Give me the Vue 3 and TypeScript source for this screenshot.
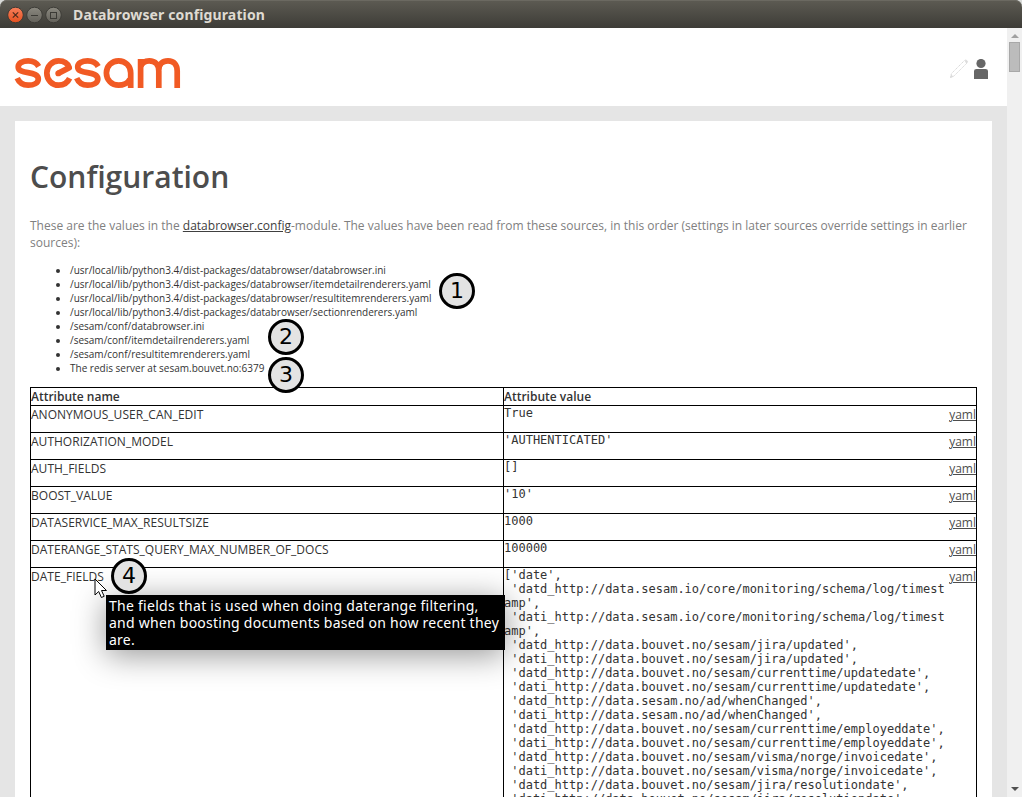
<script setup lang="ts">
interface Attribute {
  name: string
  lines: string[]
}

const sources: string[] = [
  '/usr/local/lib/python3.4/dist-packages/databrowser/databrowser.ini',
  '/usr/local/lib/python3.4/dist-packages/databrowser/itemdetailrenderers.yaml',
  '/usr/local/lib/python3.4/dist-packages/databrowser/resultitemrenderers.yaml',
  '/usr/local/lib/python3.4/dist-packages/databrowser/sectionrenderers.yaml',
  '/sesam/conf/databrowser.ini',
  '/sesam/conf/itemdetailrenderers.yaml',
  '/sesam/conf/resultitemrenderers.yaml',
  'The redis server at sesam.bouvet.no:6379',
]

const attributes: Attribute[] = [
  { name: 'ANONYMOUS_USER_CAN_EDIT', lines: ['True'] },
  { name: 'AUTHORIZATION_MODEL', lines: ["'AUTHENTICATED'"] },
  { name: 'AUTH_FIELDS', lines: ['[]'] },
  { name: 'BOOST_VALUE', lines: ["'10'"] },
  { name: 'DATASERVICE_MAX_RESULTSIZE', lines: ['1000'] },
  { name: 'DATERANGE_STATS_QUERY_MAX_NUMBER_OF_DOCS', lines: ['100000'] },
  {
    name: 'DATE_FIELDS',
    lines: [
      "['date',",
      " 'datd_http://data.sesam.io/core/monitoring/schema/log/timest",
      "amp',",
      " 'dati_http://data.sesam.io/core/monitoring/schema/log/timest",
      "amp',",
      " 'datd_http://data.bouvet.no/sesam/jira/updated',",
      " 'dati_http://data.bouvet.no/sesam/jira/updated',",
      " 'datd_http://data.bouvet.no/sesam/currenttime/updatedate',",
      " 'dati_http://data.bouvet.no/sesam/currenttime/updatedate',",
      " 'datd_http://data.sesam.no/ad/whenChanged',",
      " 'dati_http://data.sesam.no/ad/whenChanged',",
      " 'datd_http://data.bouvet.no/sesam/currenttime/employeddate',",
      " 'dati_http://data.bouvet.no/sesam/currenttime/employeddate',",
      " 'datd_http://data.bouvet.no/sesam/visma/norge/invoicedate',",
      " 'dati_http://data.bouvet.no/sesam/visma/norge/invoicedate',",
      " 'datd_http://data.bouvet.no/sesam/jira/resolutiondate',",
      " 'dati_http://data.bouvet.no/sesam/jira/resolutiondate',",
    ],
  },
]
</script>

<template>
  <div class="window">
    <header class="titlebar">
      <svg class="controls" width="50" height="18" viewBox="0 0 50 18">
        <defs>
          <linearGradient id="closeFill" x1="0" y1="0" x2="0" y2="1">
            <stop offset="0" stop-color="#f7805c" />
            <stop offset="1" stop-color="#e5501f" />
          </linearGradient>
          <linearGradient id="greyFill" x1="0" y1="0" x2="0" y2="1">
            <stop offset="0" stop-color="#8b8980" />
            <stop offset="1" stop-color="#63615a" />
          </linearGradient>
        </defs>
        <circle cx="9.5" cy="9" r="7.800" fill="url(#closeFill)" stroke="#3d3a34" />
        <path d="M6.800 6.300l5.400 5.400M12.200 6.300l-5.400 5.400" stroke="#4b2a1c" stroke-width="1.200" />
        <circle cx="28.500" cy="9" r="7.800" fill="url(#greyFill)" stroke="#3d3c37" />
        <path d="M25 9.500h7" stroke="#3b3a35" />
        <circle cx="47.500" cy="9" r="7.800" fill="url(#greyFill)" stroke="#3d3c37" />
        <rect x="44.500" y="6.500" width="6" height="6" fill="none" stroke="#3b3a35" />
      </svg>
      <span class="window-title">Databrowser configuration</span>
    </header>

    <div class="viewport">
      <main class="page">
        <div class="brandbar">
          <svg class="logo" width="168" height="34" viewBox="14 56 168 34" fill="none" stroke="#f15a24" stroke-width="5.700">
            <path d="M38.700 66.500C36.500 62.600 32.800 60.900 28.200 60.900C22.500 60.900 18.200 63.200 18.200 67C18.200 71 22.800 71.800 28 72.600C33.500 73.500 38.300 74.600 38.300 79C38.300 83 33.800 85.200 28.200 85.200C23 85.200 19.200 82.900 17.200 78.200" />
            <path d="M69.600 78.300C67.600 82.700 63.400 85.200 58.600 85.200C52 85.200 46.800 79.800 46.800 73S52 60.900 58.600 60.900C63.500 60.900 67.700 63.200 69.300 67.600L58.200 73.400" stroke-linejoin="round" />
            <circle cx="58.200" cy="73.400" r="2.850" fill="#f15a24" stroke="none" />
            <path transform="translate(59.500 0)" d="M38.700 66.500C36.500 62.600 32.800 60.900 28.200 60.900C22.500 60.900 18.200 63.200 18.200 67C18.200 71 22.800 71.800 28 72.600C33.500 73.500 38.300 74.600 38.300 79C38.300 83 33.800 85.200 28.200 85.200C23 85.200 19.200 82.900 17.200 78.200" />
            <path d="M130.700 88V73C130.700 66 125.300 60.900 118.600 60.900S106.400 66 106.400 73S111.800 85.200 118.600 85.200C123 85.200 128 83 130 79M140.600 88V59M140.600 67C142 62.700 145 60.900 149.200 60.900C155.500 60.900 158.800 64.800 158.800 71V88M158.800 70C158.800 64.500 162.300 60.900 168 60.900C174 60.900 177.200 64.800 177.200 71V88" />
          </svg>
          <div class="tools">
            <svg width="20" height="20" viewBox="0 0 20 20" fill="none">
              <path d="M1.500 18.500l1-4L15.500 1.500q1.500-1 2.500.2q1 1 0 2.300L5 17z" stroke="#dcdcdc" stroke-dasharray="1.500 .6" />
              <path d="M1 19l1.200-3.500 2.300 2.300zM15.500 1.200h2.500l.5 2.500-1.500.5z" fill="#dcdcdc" />
            </svg>
            <svg width="14" height="20" viewBox="0 0 14 20" fill="#666">
              <circle cx="7" cy="4.500" r="4.600" />
              <path d="M0 20v-8q0-2 2.500-2h9q2.500 0 2.500 2v8z" />
            </svg>
          </div>
        </div>

        <section class="sheet">
          <h1>Configuration</h1>
          <p class="intro">
            These are the values in the <a>databrowser.config</a>-module. The values have been read from these sources, in this order (settings in later sources override settings in earlier<br />sources):
          </p>
          <ul>
            <li v-for="source in sources" :key="source">{{ source }}</li>
          </ul>
          <div class="table">
            <div class="row head">
              <div class="cell">Attribute name</div>
              <div class="cell">Attribute value</div>
            </div>
            <div v-for="attribute in attributes" :key="attribute.name" class="row">
              <div class="cell name">{{ attribute.name }}</div>
              <div class="cell value">
                <pre>{{ attribute.lines.join('\n') }}</pre>
                <a>yaml</a>
              </div>
            </div>
          </div>
        </section>
      </main>

      <aside class="scrollbar">
        <svg width="8" height="4" viewBox="0 0 8 4"><path d="M0 4l4-4 4 4z" fill="#a0a0a0" /></svg>
        <div class="thumb"></div>
        <svg class="down" width="8" height="4" viewBox="0 0 8 4"><path d="M0 0h8L4 4z" fill="#505050" /></svg>
      </aside>
    </div>

    <div class="tooltip">
      <div class="tip-first">The fields that is used when doing daterange filtering,</div>
      <div>and when boosting documents based on how recent they</div>
      <div>are.</div>
    </div>
    <svg class="cursor" width="14" height="21" viewBox="0 0 14 21">
      <path d="M1 1v16l3.700-3.500 2.700 6 2.800-1.200-2.700-5.800h5z" fill="#fff" stroke="#000" />
    </svg>
    <span class="marker m1">1</span>
    <span class="marker m2">2</span>
    <span class="marker m3">3</span>
    <span class="marker m4">4</span>
  </div>
</template>

<style>
body {
  margin: 0;
  overflow: hidden;
}
</style>

<style scoped>
.window {
  position: relative;
  display: flex;
  flex-direction: column;
  width: 1022px;
  height: 797px;
  overflow: hidden;
  background: #d8dad8;
  font-family: "Open Sans", sans-serif;
  font-size: 12px;
  color: #333;
}
.titlebar {
  flex: none;
  display: flex;
  align-items: center;
  height: 28px;
  box-sizing: border-box;
  padding: 1px 0 0 6px;
  border-radius: 7px 7px 0 0;
  background: linear-gradient(#5d5b53, #3d3c37);
  box-shadow: inset 0 1px #6b6961;
}
.controls {
  overflow: visible;
}
.window-title {
  margin-left: 17px;
  font: bold 14px/20px "Noto Sans", sans-serif;
  letter-spacing: 0.13px;
  color: #dfdbd2;
  white-space: nowrap;
}
.viewport {
  flex: 1;
  display: flex;
  min-height: 0;
}
.page {
  width: 1007px;
  background: #e5e5e5;
  overflow: hidden;
}
.brandbar {
  display: flex;
  justify-content: space-between;
  height: 78px;
  background: #fff;
}
.logo {
  margin: 28px 0 0 14px;
}
.tools {
  display: flex;
  gap: 5px;
  padding: 31px 19px 0 0;
}
.sheet {
  width: 947px;
  height: 800px;
  margin: 15px 0 0 15px;
  padding: 33px 15px 0;
  background: #fff;
}
h1 {
  margin: 0;
  font-size: 30px;
  line-height: 46px;
  font-weight: 600;
  color: #4d4d4d;
}
.intro {
  margin: 17px 0 0;
  line-height: 17px;
  color: #808080;
  white-space: nowrap;
}
.intro a {
  color: #404040;
  text-decoration: underline;
}
ul {
  margin: 12px 0 0;
  padding: 0 0 0 40px;
  font-size: 10px;
  line-height: 14px;
}
.table {
  margin-top: 12px;
  border: 1px solid #000;
  width: 945px;
}
.row {
  display: flex;
  min-height: 26px;
}
.row + .row {
  border-top: 1px solid #000;
}
.head {
  min-height: 17px;
  font-weight: 600;
}
.cell {
  width: 472px;
  line-height: 17px;
}
.cell + .cell {
  border-left: 1px solid #000;
}
.name {
  letter-spacing: 0.02px;
}
.value {
  display: flex;
  justify-content: space-between;
}
.value a {
  color: #4d4d4d;
  text-decoration: underline;
}
pre {
  margin: 0;
  font: 12px/14px "DejaVu Sans Mono", monospace;
}
.scrollbar {
  display: flex;
  flex-direction: column;
  align-items: center;
  width: 15px;
  background: #f0f0f0;
  padding: 6px 0;
  box-sizing: border-box;
}
.scrollbar svg {
  flex: none;
}
.thumb {
  width: 11px;
  height: 30px;
  box-sizing: border-box;
  margin-top: 4px;
  background: #bcbcbc;
  border: 1px solid #a8a8a8;
}
.down {
  margin-top: auto;
}
.tooltip {
  position: absolute;
  left: 106px;
  top: 595px;
  width: 399px;
  height: 55px;
  box-sizing: border-box;
  padding: 2px 3px;
  background: #000;
  color: #fff;
  font: 14px/17px "Noto Sans", sans-serif;
  letter-spacing: 0.245px;
  white-space: nowrap;
  box-shadow: 0 5px 32px rgba(0, 0, 0, 0.42);
}
.tip-first {
  letter-spacing: 0.265px;
}
.cursor {
  position: absolute;
  left: 94px;
  top: 578px;
}
.marker {
  position: absolute;
  width: 36px;
  height: 36px;
  box-sizing: border-box;
  border: 3px solid #000;
  border-radius: 50%;
  background: #e3e3e3;
  color: #000;
  font: 22px/29px "DejaVu Sans", sans-serif;
  text-align: center;
}
.m1 {
  left: 439px;
  top: 273px;
}
.m2 {
  left: 268px;
  top: 319px;
}
.m3 {
  left: 268px;
  top: 357px;
}
.m4 {
  left: 111px;
  top: 558px;
}
</style>
